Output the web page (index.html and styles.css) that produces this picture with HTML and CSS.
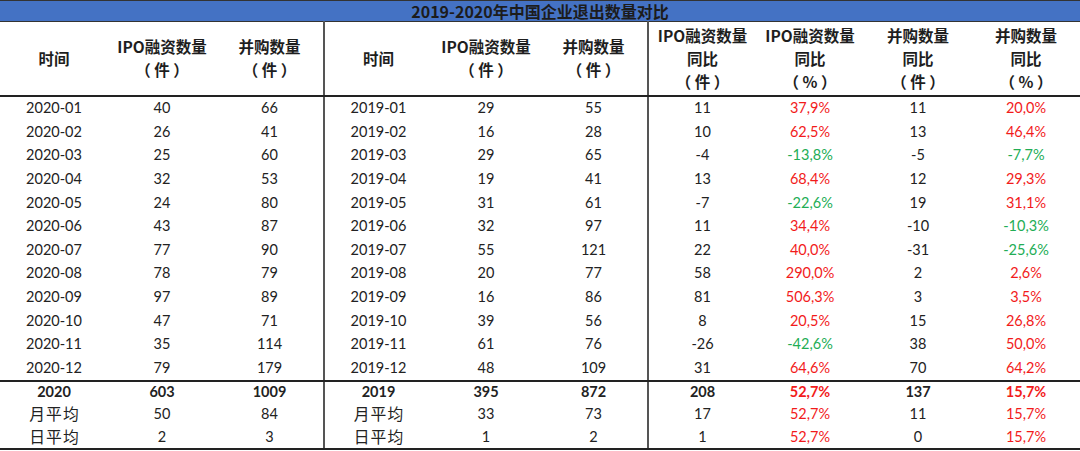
FILE: index.html
```html
<!DOCTYPE html>
<html lang="zh-CN">
<head>
<meta charset="utf-8">
<title>2019-2020年中国企业退出数量对比</title>
<link rel="stylesheet" href="styles.css">
</head>
<body>
<table class="sheet">
  <colgroup>
    <col><col><col class="sep"><col><col><col class="sep"><col><col><col><col>
  </colgroup>
  <thead>
    <tr class="title-row"><th colspan="10">2019-2020年中国企业退出数量对比</th></tr>
    <tr class="head-row">
      <th>时间</th>
      <th>IPO融资数量<br>（ 件 ）</th>
      <th class="div">并购数量<br>（ 件 ）</th>
      <th>时间</th>
      <th>IPO融资数量<br>（ 件 ）</th>
      <th class="div">并购数量<br>（ 件 ）</th>
      <th>IPO融资数量<br>同比<br>（ 件 ）</th>
      <th>IPO融资数量<br>同比<br>（ % ）</th>
      <th>并购数量<br>同比<br>（ 件 ）</th>
      <th>并购数量<br>同比<br>（ % ）</th>
    </tr>
  </thead>
  <tbody class="months">
    <tr><td>2020-01</td><td>40</td><td class="div">66</td><td>2019-01</td><td>29</td><td class="div">55</td><td>11</td><td class="up">37,9%</td><td>11</td><td class="up">20,0%</td></tr>
    <tr><td>2020-02</td><td>26</td><td class="div">41</td><td>2019-02</td><td>16</td><td class="div">28</td><td>10</td><td class="up">62,5%</td><td>13</td><td class="up">46,4%</td></tr>
    <tr><td>2020-03</td><td>25</td><td class="div">60</td><td>2019-03</td><td>29</td><td class="div">65</td><td>-4</td><td class="down">-13,8%</td><td>-5</td><td class="down">-7,7%</td></tr>
    <tr><td>2020-04</td><td>32</td><td class="div">53</td><td>2019-04</td><td>19</td><td class="div">41</td><td>13</td><td class="up">68,4%</td><td>12</td><td class="up">29,3%</td></tr>
    <tr><td>2020-05</td><td>24</td><td class="div">80</td><td>2019-05</td><td>31</td><td class="div">61</td><td>-7</td><td class="down">-22,6%</td><td>19</td><td class="up">31,1%</td></tr>
    <tr><td>2020-06</td><td>43</td><td class="div">87</td><td>2019-06</td><td>32</td><td class="div">97</td><td>11</td><td class="up">34,4%</td><td>-10</td><td class="down">-10,3%</td></tr>
    <tr><td>2020-07</td><td>77</td><td class="div">90</td><td>2019-07</td><td>55</td><td class="div">121</td><td>22</td><td class="up">40,0%</td><td>-31</td><td class="down">-25,6%</td></tr>
    <tr><td>2020-08</td><td>78</td><td class="div">79</td><td>2019-08</td><td>20</td><td class="div">77</td><td>58</td><td class="up">290,0%</td><td>2</td><td class="up">2,6%</td></tr>
    <tr><td>2020-09</td><td>97</td><td class="div">89</td><td>2019-09</td><td>16</td><td class="div">86</td><td>81</td><td class="up">506,3%</td><td>3</td><td class="up">3,5%</td></tr>
    <tr><td>2020-10</td><td>47</td><td class="div">71</td><td>2019-10</td><td>39</td><td class="div">56</td><td>8</td><td class="up">20,5%</td><td>15</td><td class="up">26,8%</td></tr>
    <tr><td>2020-11</td><td>35</td><td class="div">114</td><td>2019-11</td><td>61</td><td class="div">76</td><td>-26</td><td class="down">-42,6%</td><td>38</td><td class="up">50,0%</td></tr>
    <tr><td>2020-12</td><td>79</td><td class="div">179</td><td>2019-12</td><td>48</td><td class="div">109</td><td>31</td><td class="up">64,6%</td><td>70</td><td class="up">64,2%</td></tr>
  </tbody>
  <tbody class="totals">
    <tr class="year-row"><td>2020</td><td>603</td><td class="div">1009</td><td>2019</td><td>395</td><td class="div">872</td><td>208</td><td class="up">52,7%</td><td>137</td><td class="up">15,7%</td></tr>
    <tr class="avg-row"><td class="cjk">月平均</td><td>50</td><td class="div">84</td><td class="cjk">月平均</td><td>33</td><td class="div">73</td><td>17</td><td class="up">52,7%</td><td>11</td><td class="up">15,7%</td></tr>
    <tr class="avg-row last-row"><td class="cjk">日平均</td><td>2</td><td class="div">3</td><td class="cjk">日平均</td><td>1</td><td class="div">2</td><td>1</td><td class="up">52,7%</td><td>0</td><td class="up">15,7%</td></tr>
  </tbody>
</table>
</body>
</html>
```

FILE: styles.css
```css
html, body {
  margin: 0;
  padding: 0;
  background: #ffffff;
}

.sheet {
  width: 1080px;
  table-layout: fixed;
  border-collapse: collapse;
  font-family: Lato, "Noto Sans CJK SC", sans-serif;
  color: #222222;
  font-size: 14.5px;
}

.sheet th,
.sheet td {
  padding: 0;
  text-align: center;
  vertical-align: middle;
  white-space: nowrap;
}

.title-row th {
  height: 20px;
  background: #4472c4;
  border-top: 1px solid #333;
  border-bottom: 1px solid #333;
  font-family: "Noto Sans CJK SC", sans-serif;
  font-weight: 700;
  font-size: 16px;
  line-height: 20px;
  color: #1c1c1c;
}

.head-row th {
  height: 72.5px;
  font-family: "Noto Sans CJK SC", sans-serif;
  font-weight: 700;
  font-size: 15.5px;
  line-height: 23px;
  color: #1e1e1e;
  border-bottom: 2px solid #222;
  text-spacing-trim: space-all;
}

.sheet .div {
  border-right: 2px solid #555;
}

.months td {
  height: 23.6px;
  line-height: 18px;
}

.months tr:last-child td {
  border-bottom: 2px solid #222;
}

.year-row td {
  height: 20px;
  line-height: 20px;
  font-weight: 700;
}

.avg-row td {
  height: 23px;
  line-height: 23px;
}

.last-row td {
  border-bottom: 2px solid #222;
}

.sheet .cjk {
  font-family: "Noto Sans CJK SC", sans-serif;
  font-size: 15.8px;
  letter-spacing: 1px;
  text-indent: 1px;
}

.up {
  color: #f21b1b;
}

.down {
  color: #22ad55;
}
```
